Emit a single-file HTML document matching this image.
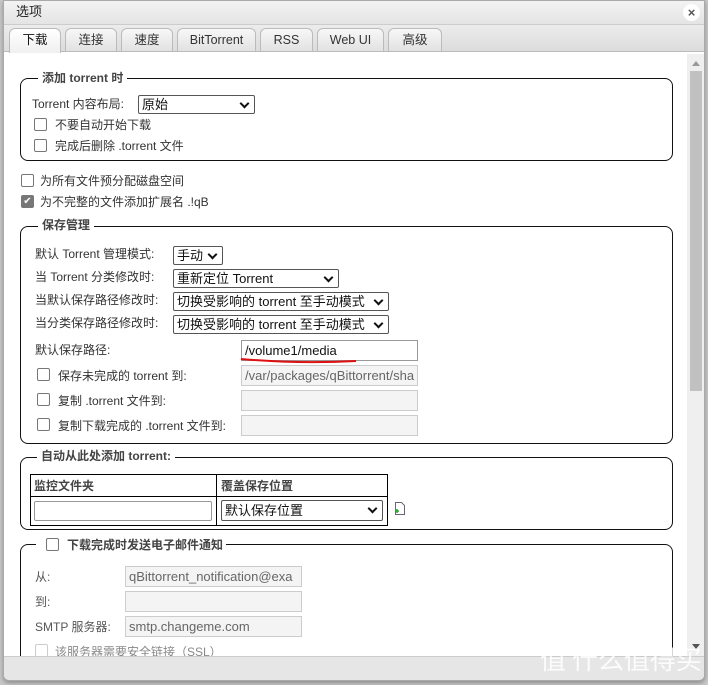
<!DOCTYPE html>
<html><head><meta charset="utf-8"><style>
*{box-sizing:border-box;margin:0;padding:0}
body{width:708px;height:685px;background:#c8c8c8;position:relative;overflow:hidden;font-family:"Liberation Sans","Noto Sans CJK SC",sans-serif;font-size:12px;color:#333}
.a{position:absolute;white-space:nowrap;line-height:14px}
#win{position:absolute;left:3px;top:0;width:702px;height:681px;background:#fff;border:1px solid #aaa;border-radius:0 0 6px 6px;overflow:hidden;box-shadow:0 2px 4px rgba(0,0,0,.3)}
.fs{position:absolute;border:1px solid #111;border-radius:8px}
.lg{position:absolute;background:#fff;padding:0 4px;font-weight:bold;color:#444;font-size:12px;line-height:14px}
.cb{position:absolute;width:13px;height:13px;border:1px solid #777;border-radius:2px;background:#fff}
.sel{position:absolute;border:1px solid #555;border-radius:2px;background:#fff;color:#111;font-size:13px;line-height:17px;padding-left:3px;height:19px;white-space:nowrap}
.sel:after{content:"";position:absolute;right:6px;top:4px;width:5px;height:5px;border-right:2px solid #111;border-bottom:2px solid #111;transform:rotate(45deg)}
.inp{position:absolute;border:1px solid #999;background:#fff;height:21px;font-size:13px;line-height:19px;padding-left:3px;color:#111;overflow:hidden;white-space:nowrap}
.dis{background:#f4f4f4;border-color:#ccc;color:#666}
.tab{position:absolute;top:27px;height:23px;border:1px solid #bbb;border-bottom:none;border-radius:6px 6px 0 0;background:linear-gradient(#f8f8f8,#e2e2e2);text-align:center;line-height:22px;font-size:12.5px;color:#333}
</style></head><body>
<div id="win">
<div class="a" style="left:0;top:0;width:702px;height:24px;background:linear-gradient(#f3f3f3,#e4e4e4);border-bottom:1px solid #ccc"></div>
<div class="a" style="left:12px;top:3px;font-size:13px;color:#222;line-height:16px">选项</div>
<div class="a" style="left:679px;top:3px;width:17px;height:17px;border-radius:50%;background:#fff;text-align:center;line-height:17px;font-size:13px;font-weight:bold;color:#555">×</div>
<div class="a" style="left:0;top:24px;width:702px;height:27px;background:linear-gradient(#ececec,#dcdcdc);border-bottom:1px solid #bbb"></div>
<div class="tab" style="left:5px;width:52px;background:linear-gradient(#fff,#f0f0f0);height:25px;color:#111">下载</div>
<div class="tab" style="left:61px;width:52px">连接</div>
<div class="tab" style="left:117px;width:52px">速度</div>
<div class="tab" style="left:173px;width:79px">BitTorrent</div>
<div class="tab" style="left:256px;width:53px">RSS</div>
<div class="tab" style="left:313px;width:67px">Web UI</div>
<div class="tab" style="left:384px;width:54px">高级</div>

<div class="a" style="left:683px;top:53px;width:17px;height:602px;background:#efefef"></div>
<div class="a" style="left:686px;top:70px;width:12px;height:320px;background:#c1c1c1"></div>
<div class="a" style="left:688px;top:60px;width:0;height:0;border-left:4px solid transparent;border-right:4px solid transparent;border-bottom:5px solid #999"></div>
<div class="a" style="left:688px;top:643px;width:0;height:0;border-left:4px solid transparent;border-right:4px solid transparent;border-top:5px solid #555"></div>

<div class="fs" style="left:16px;top:77px;width:653px;height:83px"></div>
<div class="lg" style="left:34px;top:70px">添加 torrent 时</div>
<div class="a" style="left:28px;top:96px">Torrent 内容布局:</div>
<div class="sel" style="left:134px;top:94px;width:117px">原始</div>
<div class="cb" style="left:30px;top:117px"></div><div class="a" style="left:51px;top:117px">不要自动开始下载</div>
<div class="cb" style="left:30px;top:138px"></div><div class="a" style="left:51px;top:138px">完成后删除 .torrent 文件</div>

<div class="cb" style="left:17px;top:173px"></div><div class="a" style="left:36px;top:173px">为所有文件预分配磁盘空间</div>
<div class="cb" style="left:17px;top:194px;background:#777;border-color:#777;color:#fff;font-size:10px;line-height:11px;text-align:center">✔</div><div class="a" style="left:36px;top:194px">为不完整的文件添加扩展名 .!qB</div>

<div class="fs" style="left:16px;top:225px;width:653px;height:218px"></div>
<div class="lg" style="left:34px;top:217px">保存管理</div>
<div class="a" style="left:31px;top:246px">默认 Torrent 管理模式:</div>
<div class="sel" style="left:169px;top:245px;width:50px">手动</div>
<div class="a" style="left:31px;top:269px">当 Torrent 分类修改时:</div>
<div class="sel" style="left:169px;top:268px;width:166px">重新定位 Torrent</div>
<div class="a" style="left:31px;top:292px">当默认保存路径修改时:</div>
<div class="sel" style="left:169px;top:291px;width:216px">切换受影响的 torrent 至手动模式</div>
<div class="a" style="left:31px;top:315px">当分类保存路径修改时:</div>
<div class="sel" style="left:169px;top:314px;width:216px">切换受影响的 torrent 至手动模式</div>
<div class="a" style="left:31px;top:342px">默认保存路径:</div>
<div class="inp" style="left:237px;top:339px;width:177px">/volume1/media</div>
<svg class="a" style="left:234px;top:354px" width="122" height="10"><path d="M3 4 Q60 9 118 6" stroke="#d11" stroke-width="2" fill="none"/></svg>
<div class="cb" style="left:33px;top:367px"></div><div class="a" style="left:54px;top:368px">保存未完成的 torrent 到:</div>
<div class="inp dis" style="left:237px;top:364px;width:177px">/var/packages/qBittorrent/sha</div>
<div class="cb" style="left:33px;top:392px"></div><div class="a" style="left:54px;top:393px">复制 .torrent 文件到:</div>
<div class="inp dis" style="left:237px;top:389px;width:177px"></div>
<div class="cb" style="left:33px;top:417px"></div><div class="a" style="left:54px;top:418px">复制下载完成的 .torrent 文件到:</div>
<div class="inp dis" style="left:237px;top:414px;width:177px"></div>

<div class="fs" style="left:16px;top:456px;width:653px;height:73px"></div>
<div class="lg" style="left:33px;top:448px">自动从此处添加 torrent:</div>
<div class="a" style="left:26px;top:473px;width:358px;height:52px;border:1px solid #000"></div>
<div class="a" style="left:26px;top:495px;width:358px;height:1px;background:#000"></div>
<div class="a" style="left:212px;top:473px;width:1px;height:52px;background:#000"></div>
<div class="a" style="left:30px;top:478px;font-weight:bold;color:#444">监控文件夹</div>
<div class="a" style="left:217px;top:478px;font-weight:bold;color:#444">覆盖保存位置</div>
<div class="inp" style="left:30px;top:500px;width:178px;height:20px;border-radius:2px"></div>
<div class="sel" style="left:217px;top:499px;width:162px;height:21px;line-height:19px">默认保存位置</div>
<svg class="a" style="left:390px;top:501px" width="12" height="14"><path d="M1.5 .5h6l3 3v9h-9z" fill="#fff" stroke="#667"/><path d="M1 9h4M3 7v4" stroke="#2a2" stroke-width="1.5"/></svg>

<div class="fs" style="left:16px;top:543px;width:653px;height:160px"></div>
<div class="a" style="left:32px;top:535px;width:190px;height:18px;background:#fff"></div>
<div class="cb" style="left:42px;top:537px"></div>
<div class="a" style="left:63px;top:537px;font-weight:bold;color:#444">下载完成时发送电子邮件通知</div>
<div class="a" style="left:31px;top:569px;color:#555">从:</div>
<div class="inp dis" style="left:121px;top:565px;width:177px">qBittorrent_notification@exa</div>
<div class="a" style="left:31px;top:594px;color:#555">到:</div>
<div class="inp dis" style="left:121px;top:590px;width:177px"></div>
<div class="a" style="left:31px;top:619px;color:#555">SMTP 服务器:</div>
<div class="inp dis" style="left:121px;top:615px;width:177px">smtp.changeme.com</div>
<div class="cb" style="left:31px;top:643px;border-color:#ccc"></div><div class="a" style="left:51px;top:644px;color:#888">该服务器需要安全链接（SSL）</div>

<div class="a" style="left:0;top:655px;width:702px;height:26px;background:#e6e6e6;border-top:1px solid #ccc"></div>
</div>
<div class="a" style="left:540px;top:644px;font-size:26px;line-height:30px;color:rgba(255,255,255,.85);font-family:'Noto Sans CJK SC',sans-serif">值 什么值得买</div>
</body></html>
